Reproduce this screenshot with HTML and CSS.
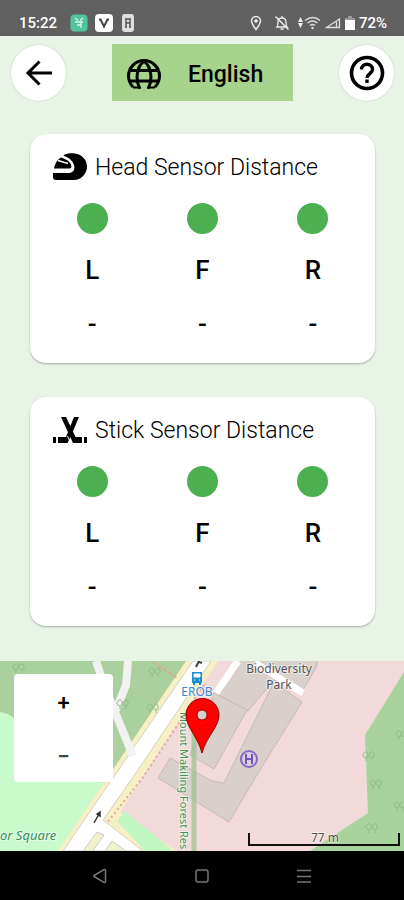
FILE: index.html
```html
<!DOCTYPE html>
<html lang="en">
<head>
    <meta charset="UTF-8">
    <meta name="viewport" content="width=device-width, initial-scale=1.0">
    <title>Sensor Distance</title>
    <link rel="stylesheet" href="styles.css">
</head>
<body>

    <!-- Status bar -->
    <div class="status-bar">
        <div class="status-left">
            <span>15:22</span>
            <svg width="18" height="18" viewBox="0 0 18 18">
                <rect x="0.5" y="0.5" width="17" height="17" rx="4" fill="#52c49c"/>
                <path d="M5 4l3 2.500M13 4l-3 2.500M5 8h8M11 8v6M7 11h4" fill="none" stroke="#d9f5ea" stroke-width="1.300"/>
            </svg>
            <svg width="18" height="18" viewBox="0 0 18 18">
                <rect width="18" height="18" rx="4" fill="#fff"/>
                <path d="M4 5.500h1.500l3.500 7 3.500-7H14" fill="none" stroke="#444" stroke-width="2"/>
            </svg>
            <svg class="icon-sim" width="12" height="18" viewBox="0 0 12 18">
                <rect width="12" height="18" rx="3" fill="#ddd"/>
                <path d="M4 13V5h4v8M4 9h4M3 5h2M7 5h2M3 13h2M7 13h2" fill="none" stroke="#555" stroke-width="1.500"/>
            </svg>
        </div>
        <div class="status-right">
            <svg class="icon-pin" width="12" height="16" viewBox="0 0 12 16">
                <path d="M6 14.500C3 10.500 1.500 8.500 1.500 6a4.500 4.500 0 0 1 9 0c0 2.500-1.500 4.500-4.500 8.500z" fill="none" stroke="#eee" stroke-width="1.500"/>
                <circle cx="6" cy="6" r="1.800" fill="#eee"/>
            </svg>
            <svg width="16" height="16" viewBox="0 0 16 16">
                <path d="M3 12h10c-1-1-1-2-1-5 0-2.500-1.500-4-4-4S4 4.500 4 7c0 3 0 4-1 5zM8 1v2M6.500 14h3" fill="none" stroke="#eee" stroke-width="1.300"/>
                <path d="M1.500 1.500l13 13" stroke="#eee" stroke-width="1.500"/>
            </svg>
            <svg class="icon-wifi" width="24" height="16" viewBox="0 0 24 16">
                <path d="M3.500 2L6 7H1zM3.500 13L6 8H1z" fill="#eee"/>
                <path d="M8 5.500q8-6 15 0M10.500 8q5-4 10 0M13 10.500q2.500-2 5 0" fill="none" stroke="#ddd" stroke-width="1.400"/>
                <circle cx="15.500" cy="13" r="1.200" fill="#ddd"/>
            </svg>
            <svg width="16" height="14" viewBox="0 0 16 14">
                <path d="M1.500 11.500L14.500 3v8.500zM11.500 6v5" fill="none" stroke="#ddd" stroke-width="1.300"/>
            </svg>
            <svg class="icon-battery" width="10" height="14" viewBox="0 0 10 14">
                <path d="M0 2h3V0h4v2h3v12H0z" fill="#999"/>
                <path d="M0 4h10v10H0z" fill="#fff"/>
            </svg>
            <span>72%</span>
        </div>
    </div>

    <!-- Top bar -->
    <header class="top-bar">
        <button type="button" class="round-button" aria-label="Back">
            <svg width="28" height="28" viewBox="0 0 28 28">
                <path d="M27 14H3M14.500 2.500L3 14l11.500 11.500" fill="none" stroke="#000" stroke-width="3"/>
            </svg>
        </button>
        <button type="button" class="language-button">
            <svg width="34" height="30" viewBox="0 0 34 30">
                <path d="M6 28A15.500 15.500 0 1 1 28 28" fill="none" stroke="#000" stroke-width="3"/>
                <path d="M13 30C8 21 9.500 8 17 2 24.500 8 26 21 21 30M3 11.500h28M3 22h28" fill="none" stroke="#000" stroke-width="3"/>
                <path d="M6 28.500h5M23 28.500h5" stroke="#000" stroke-width="2"/>
            </svg>
            English
        </button>
        <button type="button" class="round-button" aria-label="Help">
            <svg width="36" height="36" viewBox="0 0 36 36">
                <circle cx="18" cy="18" r="15.500" fill="none" stroke="#000" stroke-width="3.600"/>
                <path d="M12.500 14.500c0-7 11-7 11 0 0 4-5.500 4.300-5.500 8.500" fill="none" stroke="#000" stroke-width="3.400"/>
                <path d="M16.300 24.500h3.400v3.400h-3.400z"/>
            </svg>
        </button>
    </header>

    <main class="sensors">
        <section class="card">
            <h2>
                <svg width="34" height="28" viewBox="0 0 34 28">
                    <path d="M11 2C14 0 19 0 22 0.500c7 1 12 6.500 12 13C34 21 28 27 21 27H3c-2 0-3-1-3-3v-4h15c5 0 7-3 6-7-1-5-5-8-11-9z"/>
                    <path d="M8 4.500c6 0 10 4 10.500 8.500 0 2-1 2.500-3 2.500H1C2 10 5 6 8 4.500z"/>
                    <path d="M5 7.500l10 3" stroke="#fff" stroke-width="1.500"/>
                    <path d="M0 18.500h16q5-1 4-5.500-2-7-11-9.500" fill="none" stroke="#fff" stroke-width="2.500"/>
                </svg>
                Head Sensor Distance
            </h2>
            <table>
                <tr class="dots"><td><i class="dot"></i></td><td><i class="dot"></i></td><td><i class="dot"></i></td></tr>
                <tr><th>L</th><th>F</th><th>R</th></tr>
                <tr class="values"><td>-</td><td>-</td><td>-</td></tr>
            </table>
        </section>

        <section class="card">
            <h2>
                <svg width="34" height="28" viewBox="0 0 34 28">
                    <path d="M8 1h5l9.500 20H29v6h-9z"/>
                    <path d="M26 1h-5l-8 20H5v6h9.500l3-6z"/>
                    <path d="M0 21h3v6H0zM31 21h3v6h-3z"/>
                    <path d="M14.500 20l3 6.500" stroke="#fff" stroke-width="1"/>
                </svg>
                Stick Sensor Distance
            </h2>
            <table>
                <tr class="dots"><td><i class="dot"></i></td><td><i class="dot"></i></td><td><i class="dot"></i></td></tr>
                <tr><th>L</th><th>F</th><th>R</th></tr>
                <tr class="values"><td>-</td><td>-</td><td>-</td></tr>
            </table>
        </section>
    </main>

    <!-- Map -->
    <div class="map">
        <svg class="map-tiles" viewBox="0 0 404 190" preserveAspectRatio="xMidYMid slice">
            <rect width="404" height="190" fill="#f2dada"/>
            <!-- woods and grass -->
            <path d="M0 0h200L70 190H0z" fill="#a9d09d"/>
            <path d="M0 51q8 1 14 6l92 66 14-10-50 77H0z" fill="#c8facc"/>
            <path d="M404 11l-39 63 3 78-58 38h94z" fill="#a9d39d"/>
            <!-- buildings -->
            <g fill="#d9d0cb" stroke="#c6bab5">
                <path d="M238 -1h79v6l-14 24-29-10-10 12-16 19-33-18z"/>
                <path d="M214 32l33 17-33 59-24-14z"/>
                <path d="M274 21l28 20-42 68-31 52-71-44 12-20 42 23 12 2z"/>
            </g>
            <path d="M238 0l-22 32M255 2l48 30" stroke="#fff" stroke-width="7" fill="none"/>
            <!-- road -->
            <path d="M186 0h32L145 112l-25 39 56 39H58z" fill="#f6f0c4"/>
            <path d="M125 150l-8 10 28 30h28z" fill="#c0f6c0"/>
            <path d="M193 0h18L138 109l-35 50 40 31H63z" fill="#fff" stroke="#d5d0c0"/>
            <path d="M97 171l7 3-11 16H83zM112 180l14 10h-21z" fill="#f1f1cd" stroke="#ccc"/>
            <path d="M204 24l-60 91-38 48" stroke="#e9a59a" stroke-width="2" stroke-dasharray="2 3" fill="none"/>
            <path d="M153 1l24 16" stroke="#dfaa91" stroke-width="2" stroke-dasharray="4 2" fill="none"/>
            <path d="M96 0l6 18 13 34M128 0l-2 24-11 27 18 44" stroke="#f3f2f2" stroke-width="8" fill="none"/>
            <path d="M194 40v150" stroke="#9cc08f" stroke-width="5" opacity="0.7"/>
            <path d="M94 162l5-9M97 153l3-2v4z" stroke="#333" stroke-width="1.500" fill="#333"/>
            <path d="M196 6l3-6M199 1l3 1" stroke="#444" stroke-width="2"/>
            <!-- trees -->
            <g fill="none" stroke="#8fbc85" stroke-width="1">
                <path id="tree" d="M16 12V9q-5-2-2-5t4 1-2 4M22 12V9q-5-2-2-5t4 1-2 4"/>
                <use href="#tree" x="136" y="4"/>
                <use href="#tree" x="104" y="36"/>
                <use href="#tree" x="134" y="40"/>
                <use href="#tree" x="383" y="67"/>
                <use href="#tree" x="350" y="88"/>
                <use href="#tree" x="357" y="116"/>
                <use href="#tree" x="381" y="138"/>
                <use href="#tree" x="353" y="160"/>
            </g>
            <!-- bus stop -->
            <path d="M192 11h10v11h-1v2h-2v-2h-4v2h-2v-2h-1z" fill="#1c8fd0"/>
            <path d="M194 13h6v3h-6zM194 19h1M199 19h1" fill="#fff" stroke="#fff"/>
            <!-- hospital -->
            <circle cx="249" cy="98" r="8" fill="#d9d0e0" stroke="#8a6bc4" stroke-width="2"/>
            <path d="M246 93v10M252 93v10M246 98h6" stroke="#7652bb" stroke-width="2"/>
            <!-- labels -->
            <g class="map-labels">
                <text x="279" y="12">Biodiversity</text>
                <text x="279" y="28">Park</text>
                <text class="label-stop" x="197" y="35">EROB</text>
                <text class="label-forest" transform="translate(180 51) rotate(90)">Mount Makiling Forest Res</text>
                <text class="label-square" x="0" y="179">or Square</text>
                <text x="325" y="181">77 m</text>
            </g>
            <path d="M249 172v12h150v-12" fill="none" stroke="#111" stroke-width="2"/>
            <!-- marker -->
            <path d="M202 92C198 76 186 66 186 54a16.500 16.500 0 0 1 33 0c0 12-13 22-17 38z" fill="#f00" stroke="#900"/>
            <circle cx="202" cy="54" r="5" fill="#d9d0cb" stroke="#900"/>
        </svg>
        <div class="zoom">
            <button type="button" aria-label="Zoom in">+</button>
            <button type="button" class="zoom-out" aria-label="Zoom out">−</button>
        </div>
    </div>

    <!-- System navigation -->
    <nav class="nav-bar">
        <button type="button" aria-label="System back">
            <svg width="16" height="16" viewBox="0 0 16 16"><path d="M13.500 2v12q-1 1-2 0L2 8.500v-1L11.500 2q1-1 2 0z"/></svg>
        </button>
        <button type="button" aria-label="Home">
            <svg width="16" height="16" viewBox="0 0 16 16"><rect x="2" y="2" width="12" height="12" rx="2"/></svg>
        </button>
        <button type="button" aria-label="Recent apps">
            <svg width="16" height="16" viewBox="0 0 16 16"><path d="M1 2.500h14M1 8.500h14M1 14h14"/></svg>
        </button>
    </nav>

</body>
</html>
```
FILE: styles.css
```css
:root {
    --bar: #606060;
    --page: #e8f5e6;
    --green: #4caf50;
    --language: #a7d48c;
}

* {
    margin: 0;
    padding: 0;
    box-sizing: border-box;
    font-family: Roboto, sans-serif;
}

body {
    background: var(--page);
    color: #000;
    min-height: 100vh;
    display: flex;
    flex-direction: column;
}

svg {
    display: block;
    flex-shrink: 0;
}

button {
    border: none;
    background: none;
    color: inherit;
    cursor: pointer;
}

.status-bar {
    display: flex;
    justify-content: space-between;
    height: 36px;
    padding: 10px 17px 0 19px;
    background: var(--bar);
    color: #fff;
    font-size: 15px;
    font-weight: 500;
    line-height: 26px;
}

.status-left,
.status-right {
    display: flex;
    align-items: center;
}

.status-left {
    gap: 7px;
}

.status-left span {
    margin-right: 6px;
}

.icon-sim {
    margin-left: 2px;
}

.status-right {
    gap: 4px;
}

.icon-pin {
    margin-right: 8px;
}

.icon-wifi {
    margin-left: 3px;
}

.top-bar {
    display: flex;
    justify-content: space-between;
    align-items: center;
    padding: 8px 10px 0 11px;
}

.round-button {
    display: flex;
    align-items: center;
    justify-content: center;
    width: 55px;
    height: 56px;
    border-radius: 50%;
    background: #fff;
    box-shadow: 0 0 2px rgba(0, 0, 0, 0.2);
}

.language-button {
    display: flex;
    align-items: center;
    gap: 27px;
    width: 181px;
    height: 57px;
    padding: 3px 15px 0;
    background: var(--language);
    font-size: 23px;
    font-weight: 500;
}

.sensors {
    display: flex;
    flex-direction: column;
    gap: 34px;
    padding: 33px 29px 35px 30px;
}

.card {
    background: #fff;
    border-radius: 16px;
    padding: 18px 7px 15px;
    box-shadow: 0 1px 2px rgba(0, 0, 0, 0.3);
}

.card h2 {
    display: flex;
    align-items: center;
    gap: 8px;
    height: 30px;
    padding-left: 16px;
    font-size: 23px;
    font-weight: 300;
    white-space: nowrap;
}

.card table {
    width: 100%;
    table-layout: fixed;
    border-collapse: collapse;
    text-align: center;
}

.card th {
    height: 60px;
    font-size: 26px;
    font-weight: 500;
}

.dots td {
    height: 58px;
    padding-top: 14px;
}

.dot {
    display: block;
    width: 31px;
    height: 31px;
    margin: 0 auto;
    border-radius: 50%;
    background: var(--green);
}

.values td {
    height: 48px;
    font-size: 26px;
    font-weight: 500;
}

.map {
    position: relative;
    flex: 1;
    min-height: 190px;
    overflow: hidden;
}

.map-tiles {
    width: 100%;
    height: 100%;
}

.map-labels text {
    font-family: "Noto Sans", sans-serif;
    font-size: 12px;
    fill: #555;
    text-anchor: middle;
    stroke: rgba(255, 255, 255, 0.5);
    stroke-width: 2px;
    paint-order: stroke;
}

.map-labels .label-stop {
    fill: #3b87d8;
}

.map-labels .label-forest {
    font-size: 11px;
    fill: #3f9450;
    text-anchor: start;
}

.map-labels .label-square {
    font-size: 13px;
    font-style: italic;
    fill: #3c8d5c;
    text-anchor: start;
}

.zoom {
    position: absolute;
    top: 13px;
    left: 14px;
    display: flex;
    flex-direction: column;
    width: 99px;
    height: 108px;
    border-radius: 4px;
    background: #fff;
}

.zoom button {
    flex: 1;
    padding-top: 2px;
    font-size: 22px;
    font-weight: 500;
}

.zoom .zoom-out {
    color: #444;
}

.nav-bar {
    display: flex;
    justify-content: center;
    gap: 86px;
    height: 49px;
    background: #000;
}

.nav-bar svg {
    fill: none;
    stroke: #777;
    stroke-width: 1.5;
}
```
